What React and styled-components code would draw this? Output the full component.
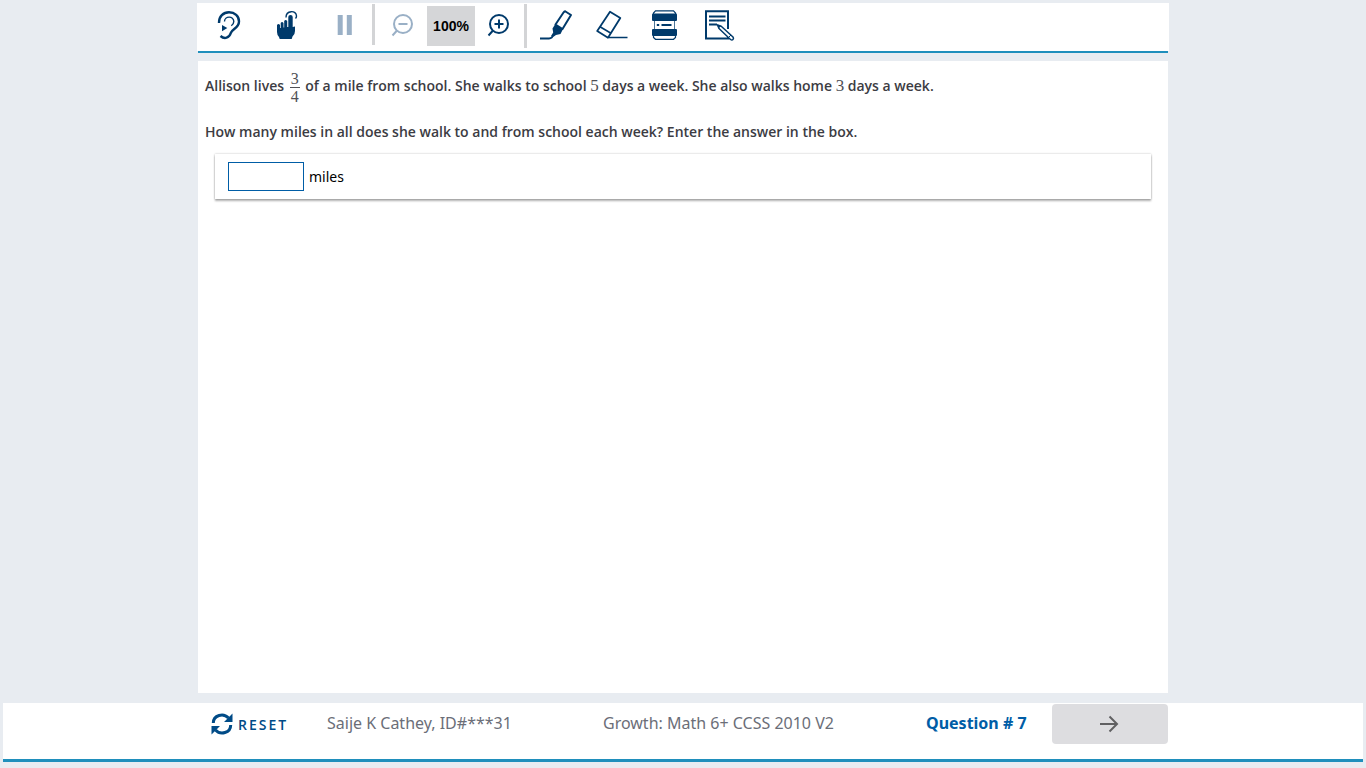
import React, { useState } from 'react';
import styled, { createGlobalStyle } from 'styled-components';

const navy = '#003a6b';
const teal = '#1f8fbc';

const GlobalStyle = createGlobalStyle`
  * {
    box-sizing: border-box;
  }
  body {
    margin: 0;
    background: #e8ecf1;
    font-family: 'Noto Sans', 'Open Sans', sans-serif;
  }
  button, input {
    font-family: inherit;
  }
`;

const Page = styled.div`
  display: flex;
  flex-direction: column;
  min-height: 100vh;
  padding: 3px 3px 6px;
`;

const Header = styled.header`
  width: 100%;
  max-width: 972px;
  margin: 0 auto;
`;

const Toolbar = styled.div`
  display: flex;
  align-items: flex-start;
  height: 48px;
  padding: 0 3px;
  background: white;
`;

const HeaderLine = styled.div`
  height: 2px;
  margin: 0 1px;
  background: ${teal};
`;

const ToolButton = styled.button`
  display: flex;
  align-items: center;
  justify-content: center;
  width: ${(props) => props.$width}px;
  height: 44px;
  padding: 0;
  border: none;
  background: none;
  color: ${navy};
  cursor: pointer;
  &:disabled {
    color: #9ab0c6;
    cursor: default;
  }
`;

const Icon = styled.svg`
  width: 32px;
  height: 32px;
  flex: none;
  overflow: visible;
  fill: none;
  stroke: currentColor;
  stroke-width: 2;
`;

const Divider = styled.div`
  width: 3px;
  height: ${(props) => props.$height}px;
  margin: 1px ${(props) => props.$after}px 0 ${(props) => props.$before}px;
  background: #d3d4d6;
`;

const ZoomLevel = styled.output`
  display: flex;
  align-items: center;
  justify-content: center;
  width: 48px;
  height: 40px;
  margin-top: 3px;
  background: #d5d6d8;
  color: black;
  font: bold 14px 'Liberation Sans', Arial, sans-serif;
`;

const Content = styled.main`
  flex: 1;
  width: 100%;
  max-width: 970px;
  margin: 8px auto 10px;
  padding: 9px 7px;
  background: white;
`;

const QuestionText = styled.p`
  margin: 0 0 17px;
  color: #3c3c43;
  font-family: 'Open Sans', 'Noto Sans', sans-serif;
  font-size: 14px;
  font-weight: 600;
  line-height: 20px;
`;

const MathNumber = styled.span`
  color: #505055;
  font-family: 'Liberation Serif', 'Times New Roman', serif;
  font-size: 17px;
  font-weight: normal;
`;

const Fraction = styled.span`
  display: inline-flex;
  flex-direction: column;
  align-items: center;
  width: 10px;
  margin: 0 2px;
  vertical-align: middle;
  color: #505055;
  font-family: 'Liberation Serif', 'Times New Roman', serif;
  font-size: 16px;
  font-weight: normal;
  line-height: 17px;
`;

const Numerator = styled.span`
  width: 100%;
  border-bottom: 1px solid #505055;
  text-align: center;
`;

const AnswerBox = styled.div`
  display: flex;
  align-items: center;
  gap: 5px;
  height: 45px;
  margin: -5px 10px 0;
  padding: 0 13px;
  background: white;
  box-shadow: 0 2px 2px rgba(0, 0, 0, 0.3), 0 0 2px rgba(0, 0, 0, 0.25);
`;

const AnswerInput = styled.input`
  width: 76px;
  height: 29px;
  padding: 0 6px;
  border: 1px solid #005da6;
  border-radius: 0;
  background: white;
  font-size: 14px;
  outline: none;
`;

const AnswerLabel = styled.label`
  color: black;
  font-size: 14px;
`;

const Footer = styled.footer`
  height: 59px;
  border-bottom: 3px solid ${teal};
  background: white;
`;

const FooterRow = styled.div`
  display: grid;
  grid-template-columns: 129fr 276fr 323fr 126fr 116fr;
  align-items: center;
  max-width: 970px;
  margin: 0 auto;
  padding-top: 1px;
  color: #6b6e78;
  font-size: 16px;
  line-height: 38px;
  white-space: nowrap;
`;

const FooterText = styled.span`
  align-self: start;
`;

const ResetButton = styled.button`
  display: flex;
  align-items: center;
  gap: 5px;
  padding: 0 0 0 13px;
  border: none;
  background: none;
  color: #004b87;
  font-family: 'Open Sans', 'Noto Sans', sans-serif;
  font-size: 14px;
  font-weight: 600;
  letter-spacing: 2px;
  cursor: pointer;
`;

const ResetIcon = styled.svg`
  width: 22px;
  height: 22px;
  fill: none;
  stroke: currentColor;
  stroke-width: 3;
`;

const QuestionNumber = styled.strong`
  align-self: start;
  color: #005da6;
  font-weight: 700;
`;

const NextButton = styled.button`
  display: flex;
  align-items: center;
  justify-content: center;
  height: 40px;
  padding: 0;
  border: none;
  border-radius: 4px;
  background: #dddde0;
  color: #606062;
`;

const NextIcon = styled.svg`
  width: 24px;
  height: 24px;
  fill: none;
  stroke: currentColor;
  stroke-width: 2;
`;

const EarIcon = () => (
  <Icon viewBox="0 0 32 32">
    <path d="M6 14C5.700 7.500 10.500 3.300 16 3.300C21.800 3.300 26 7 26 12.500C26 19 19.500 19.500 17.800 24C16.300 29 11.500 30.500 7.500 27" strokeWidth="2.400" />
    <path d="M11.500 12.500C11.500 6.800 20.800 6.500 20.800 12.500C20.800 14.500 20 15.500 18.300 16.800" strokeWidth="1.400" />
    <path d="M9 16L14.300 19L9 22.300Z" fill="currentColor" stroke="none" />
  </Icon>
);

const HandIcon = () => (
  <Icon viewBox="0 0 32 32">
    <path
      d="M6 16Q7.500 14 9 16V19H9.700V14Q11 12 12.500 14V18.500H13.200V12Q14.600 10 16.200 12V18H17.300V8Q17.300 6 19.500 6T21.700 8V18L24 17.500V22Q24 25.500 21.500 27.500L20.700 30H8.700L8 28Q6 26 6 23Z"
      fill="currentColor"
      stroke="none"
    />
    <path d="M15 8.500C15 1 25.500 1 25.500 7Q25.500 8.500 24.500 9.500" strokeWidth="1.400" />
  </Icon>
);

const PauseIcon = () => (
  <Icon viewBox="0 0 32 32">
    <path d="M9.700 6h5v20h-5zM18.800 6h5v20h-5z" fill="currentColor" stroke="none" />
  </Icon>
);

const ZoomIcon = ({ plus }) => (
  <Icon viewBox="0 0 32 32">
    <circle cx="16" cy="15" r="9" />
    <path d="M10 21.500L5.500 26.500M11.500 15h9" />
    {plus && <path d="M16 10.500v9" />}
  </Icon>
);

const HighlighterIcon = () => (
  <Icon viewBox="0 0 32 32">
    <path d="M25.500 2.500L31 6L22.500 20L15.500 15.500L23.500 3.500Q24.500 2 25.500 2.500Z" strokeLinejoin="round" />
    <path d="M15 15.500L23 20L20.500 25L16 26L12.500 28.500L11 27L13.200 23.500L12.500 19.500Z" fill="currentColor" stroke="none" />
    <path d="M0 29.500h9q1.500 0 3.500-1.500" strokeWidth="2" />
  </Icon>
);

const EraserIcon = () => (
  <Icon viewBox="0 0 32 32">
    <path d="M16 2.700L26.300 9L14 28.800L3.200 22Z" strokeWidth="1.800" strokeLinejoin="round" />
    <path d="M6 17.700L17 24.300M15 28.500h18.500" strokeWidth="1.600" />
  </Icon>
);

const LineReaderIcon = () => (
  <Icon viewBox="0 0 32 32">
    <path d="M5.500 5V4L7.500 1.800H25.500L27.500 4V5M5.500 27V28.500L7.500 30.300H25.500L27.500 28.500V27" strokeWidth="1.200" />
    <path d="M6.500 11V20.500M26.500 11V20.500" strokeWidth="1" opacity="0.700" />
    <rect x="4" y="4.500" width="25" height="7.500" rx="1" fill="currentColor" stroke="none" />
    <rect x="4" y="20" width="25" height="7" rx="1" fill="currentColor" stroke="none" />
    <path d="M8.800 16h2.400M13.500 16h10" strokeWidth="2" />
  </Icon>
);

const NotepadIcon = () => (
  <Icon viewBox="0 0 32 32">
    <path d="M26 20V2.300H4V29.500H26V28" />
    <path d="M7 7.500h16.500M7 11.500h16.500M7 15.500h8" strokeWidth="1.800" />
    <path d="M15.500 16L17 19.500L28.500 30.500Q30 31.500 31 30.500T31 28L19.200 17.300Z" fill="white" strokeWidth="1.500" strokeLinejoin="round" />
    <path d="M15 15.200L19 17L16.500 19.500Z" fill="currentColor" stroke="none" />
    <path d="M26.500 28.500L29 26" strokeWidth="1" />
  </Icon>
);

const leftTools = [
  { label: 'Read aloud', icon: <EarIcon />, width: 58 },
  { label: 'Click to hear', icon: <HandIcon />, width: 58 },
  { label: 'Pause', icon: <PauseIcon />, width: 56, disabled: true },
];

const rightTools = [
  { label: 'Highlighter', icon: <HighlighterIcon /> },
  { label: 'Eraser', icon: <EraserIcon /> },
  { label: 'Line reader', icon: <LineReaderIcon /> },
  { label: 'Notepad', icon: <NotepadIcon /> },
];

const App = () => {
  const [answer, setAnswer] = useState('');

  return (
    <>
      <GlobalStyle />
      <Page>
        <Header>
          <Toolbar>
            {leftTools.map((tool) => (
              <ToolButton key={tool.label} $width={tool.width} aria-label={tool.label} disabled={tool.disabled}>
                {tool.icon}
              </ToolButton>
            ))}
            <Divider $height={41} $before={0} $after={4} />
            <ToolButton $width={48} aria-label="Zoom out" disabled>
              <ZoomIcon />
            </ToolButton>
            <ZoomLevel>100%</ZoomLevel>
            <ToolButton $width={48} aria-label="Zoom in">
              <ZoomIcon plus />
            </ToolButton>
            <Divider $height={44} $before={1} $after={2} />
            {rightTools.map((tool) => (
              <ToolButton key={tool.label} $width={54} aria-label={tool.label}>
                {tool.icon}
              </ToolButton>
            ))}
          </Toolbar>
          <HeaderLine />
        </Header>

        <Content>
          <QuestionText>
            Allison lives{' '}
            <Fraction>
              <Numerator>3</Numerator>
              <span>4</span>
            </Fraction>{' '}
            of a mile from school. She walks to school <MathNumber>5</MathNumber> days a week. She also walks home{' '}
            <MathNumber>3</MathNumber> days a week.
          </QuestionText>
          <QuestionText>
            How many miles in all does she walk to and from school each week? Enter the answer in the box.
          </QuestionText>
          <AnswerBox>
            <AnswerInput id="answer" type="text" value={answer} onChange={(e) => setAnswer(e.target.value)} />
            <AnswerLabel htmlFor="answer">miles</AnswerLabel>
          </AnswerBox>
        </Content>

        <Footer>
          <FooterRow>
            <ResetButton onClick={() => setAnswer('')}>
              <ResetIcon viewBox="0 0 22 22">
                <path d="M2.300 10C2.300 2 12.500-0.500 17.500 5M19.700 12C19.700 20 9.500 22.500 4.500 17" />
                <path d="M21.500 0.500V9H13ZM0.500 21.500V13H9Z" fill="currentColor" stroke="none" />
              </ResetIcon>
              RESET
            </ResetButton>
            <FooterText>Saije K Cathey, ID#***31</FooterText>
            <FooterText>Growth: Math 6+ CCSS 2010 V2</FooterText>
            <QuestionNumber>Question # 7</QuestionNumber>
            <NextButton aria-label="Next question">
              <NextIcon viewBox="0 0 24 24">
                <path d="M2 12h17M11.500 4.500L19 12L11.500 19.500" />
              </NextIcon>
            </NextButton>
          </FooterRow>
        </Footer>
      </Page>
    </>
  );
};

export default App;
